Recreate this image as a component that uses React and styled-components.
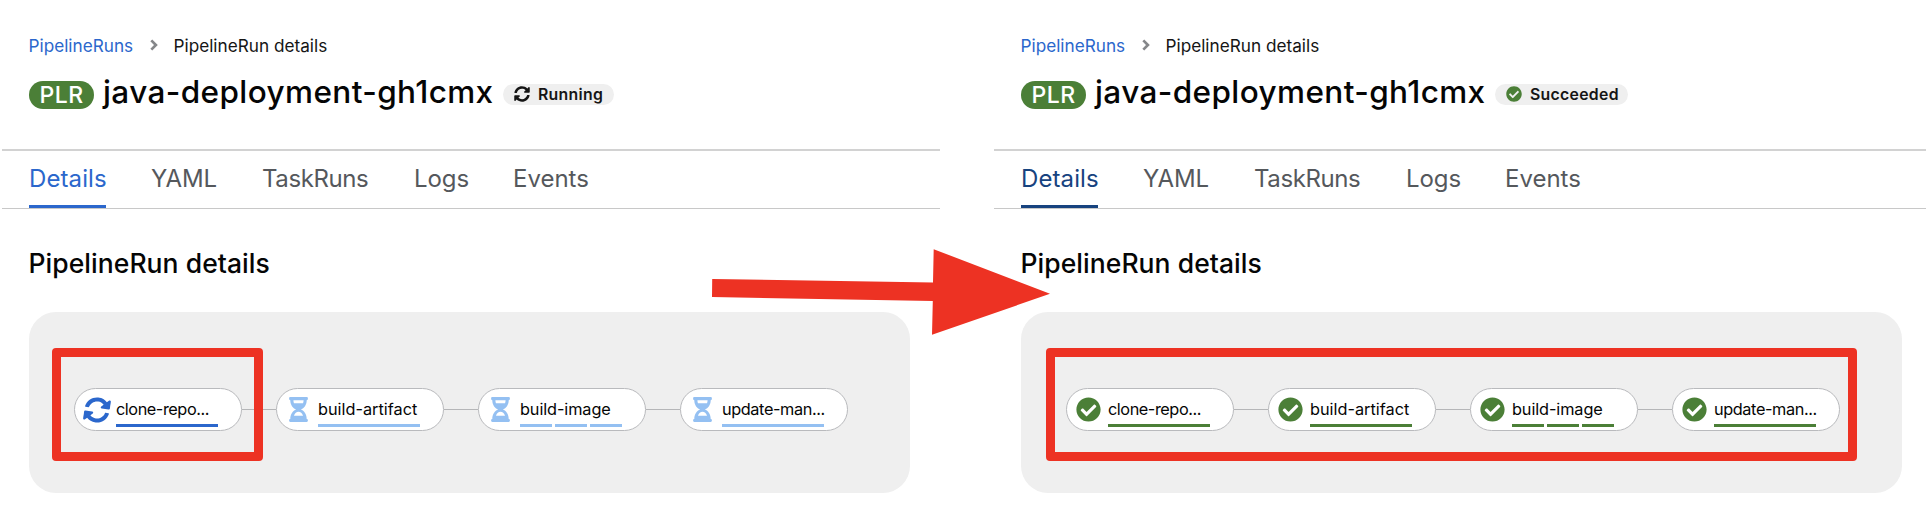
import React from 'react';
import styled, { createGlobalStyle } from 'styled-components';
import { FaCheckCircle, FaHourglassHalf, FaSyncAlt } from 'react-icons/fa';

const GlobalStyle = createGlobalStyle`
  *, *::before, *::after { box-sizing: border-box; }
  body {
    margin: 0;
    background: #fff;
    font-family: Inter, "Liberation Sans", sans-serif;
    color: #050505;
    overflow: hidden;
  }
`;

const Comparison = styled.main`
  position: relative;
  display: grid;
  grid-template-columns: 938px 932px;
  column-gap: 54px;
  height: 512px;
  padding-left: 2px;
  overflow: hidden;
`;

const Panel = styled.section`
  display: flex;
  flex-direction: column;
  min-width: 0;
`;

const Breadcrumb = styled.nav`
  display: flex;
  align-items: center;
  height: 22px;
  margin-top: 34px;
  padding-left: 26.5px;
  font-size: 17.2px;
  letter-spacing: 0;
  white-space: nowrap;

  svg { flex: none; margin: 0 16px 0 15px; }
`;

const Crumb = styled.a`
  width: ${(p) => (p.$width ? `${p.$width}px` : 'auto')};
  color: ${(p) => (p.$link ? '#2b67cc' : '#151515')};
`;

const Heading = styled.header`
  display: flex;
  align-items: center;
  height: 40px;
  margin-top: 19px;
  padding-left: 27px;
`;

const KindBadge = styled.span`
  display: flex;
  align-items: center;
  justify-content: center;
  width: 65px;
  height: 28px;
  padding-bottom: 1px;
  border-radius: 14px;
  background: #4b7f37;
  color: #fff;
  font-size: 23px;
  font-weight: 500;
  letter-spacing: 0.5px;
`;

const Name = styled.h1`
  width: 400px;
  margin: 0 0 6px 9px;
  font-size: 31.5px;
  font-weight: 500;
  line-height: 40px;
  letter-spacing: 0.4px;
  white-space: nowrap;
`;

const Status = styled.span`
  display: flex;
  align-items: center;
  width: ${(p) => p.$width}px;
  height: 21px;
  margin-bottom: 1px;
  padding: 0 0 1px 11px;
  border-radius: 11px;
  background: #efefef;
  color: #151515;
  font-size: 15.8px;
  font-weight: 600;
  letter-spacing: 0.3px;

  svg { flex: none; margin-right: 8px; color: ${(p) => p.$iconColor}; }
`;

const Tabs = styled.nav`
  display: flex;
  height: 60px;
  margin-top: 34px;
  padding-left: 27px;
  border-top: 2px solid #d2d2d2;
  border-bottom: 1px solid #c8c8c8;
`;

const Tab = styled.a`
  width: ${(p) => p.$width}px;
  margin-right: 45px;
  padding-top: 10px;
  border-bottom: 3px solid ${(p) => p.$active || 'transparent'};
  color: ${(p) => p.$active || '#55585c'};
  font-size: 24px;
  line-height: 35px;
  letter-spacing: ${(p) => p.$tracking}px;
  white-space: nowrap;
`;

const SectionTitle = styled.h2`
  margin: 36px 0 0 26.5px;
  height: 36px;
  font-size: 26.5px;
  font-weight: 500;
  line-height: 36px;
  letter-spacing: 0.05px;
`;

const Graph = styled.div`
  position: relative;
  display: flex;
  align-items: center;
  width: 881px;
  height: 181px;
  margin: 31px 0 0 27px;
  padding: 14px 0 0 44.5px;
  border-radius: 27px;
  background: #efefef;
`;

const Connector = styled.span`
  width: 34px;
  height: 1px;
  background: #b5b6b8;
`;

const Task = styled.div`
  display: flex;
  align-items: center;
  width: 168px;
  height: 43px;
  border: 1px solid #b9babd;
  border-radius: 22px;
  background: #fff;
`;

const TaskIcon = styled.span`
  display: flex;
  justify-content: center;
  width: 27px;
  margin: 0 6px 0 8.5px;
  color: ${(p) => p.$color};

  svg { flex: none; transform: rotate(${(p) => p.$turn || 0}deg); }
`;

const TaskBody = styled.div`
  display: flex;
  flex-direction: column;
  width: 102px;
  padding-top: 7px;
`;

const TaskLabel = styled.span`
  height: 21px;
  font-size: 16.3px;
  line-height: 21px;
  letter-spacing: ${(p) => p.$tracking}px;
  white-space: nowrap;
`;

const Steps = styled.div`
  display: flex;
  gap: 3px;
  margin-top: 4px;
`;

const Step = styled.span`
  flex: 1;
  height: 3px;
  background: ${(p) => p.$color};
`;

const Highlight = styled.div`
  position: absolute;
  top: 36px;
  left: ${(p) => p.$left}px;
  width: ${(p) => p.$width}px;
  height: 113px;
  border: 9px solid #ed3223;
  border-radius: 4px;
`;

const Arrow = styled.svg`
  position: absolute;
  left: 712px;
  top: 249px;
`;

const BLUE = '#2b67cc';
const NAVY = '#17437f';
const PALE = '#94c0f2';
const GREEN = '#4b7f37';

const STATES = {
  running: { Icon: FaSyncAlt, color: BLUE, size: 26, turn: 8 },
  pending: { Icon: FaHourglassHalf, color: PALE, size: 25 },
  succeeded: { Icon: FaCheckCircle, color: GREEN, size: 25 },
};

const TASKS = [
  { name: 'clone-repo...', steps: 1, tracking: -0.45 },
  { name: 'build-artifact', steps: 1, tracking: 0 },
  { name: 'build-image', steps: 3, tracking: -0.1 },
  { name: 'update-man...', steps: 1, tracking: -0.4 },
];

const TABS = [
  ['Details', 77, 0.1],
  ['YAML', 66, -0.1],
  ['TaskRuns', 107, -0.4],
  ['Logs', 54, -0.1],
  ['Events', 76, 0],
];

function Chevron() {
  return (
    <svg width="8" height="12" viewBox="0 0 8 12" fill="none" stroke="#85878a" strokeWidth="2.7">
      <path d="M1.3 1.4L5.9 6L1.3 10.6" />
    </svg>
  );
}

function TaskNode({ name, steps, tracking, state }) {
  const { Icon, color, size, turn } = STATES[state];
  return (
    <Task>
      <TaskIcon $color={color} $turn={turn}><Icon size={size} /></TaskIcon>
      <TaskBody>
        <TaskLabel $tracking={tracking}>{name}</TaskLabel>
        <Steps>
          {Array.from({ length: steps }, (_, i) => <Step key={i} $color={color} />)}
        </Steps>
      </TaskBody>
    </Task>
  );
}

function PipelineRun({ status, accent, taskStates, highlight }) {
  return (
    <Panel>
      <Breadcrumb>
        <Crumb $link $width={106}>PipelineRuns</Crumb>
        <Chevron />
        <Crumb>PipelineRun details</Crumb>
      </Breadcrumb>
      <Heading>
        <KindBadge>PLR</KindBadge>
        <Name>java-deployment-gh1cmx</Name>
        <Status $width={status.width} $iconColor={status.color}>
          <status.Icon size={16} />
          {status.label}
        </Status>
      </Heading>
      <Tabs>
        {TABS.map(([label, width, tracking], i) => (
          <Tab key={label} $width={width} $tracking={tracking} $active={i === 0 ? accent : undefined}>
            {label}
          </Tab>
        ))}
      </Tabs>
      <SectionTitle>PipelineRun details</SectionTitle>
      <Graph>
        {TASKS.map((task, i) => (
          <React.Fragment key={task.name}>
            {i > 0 && <Connector />}
            <TaskNode {...task} state={taskStates[i]} />
          </React.Fragment>
        ))}
        <Highlight $left={highlight.left} $width={highlight.width} />
      </Graph>
    </Panel>
  );
}

export default function App() {
  return (
    <>
      <GlobalStyle />
      <Comparison>
        <PipelineRun
          status={{ label: 'Running', width: 111, Icon: FaSyncAlt, color: '#151515' }}
          accent={BLUE}
          taskStates={['running', 'pending', 'pending', 'pending']}
          highlight={{ left: 23, width: 211 }}
        />
        <PipelineRun
          status={{ label: 'Succeeded', width: 133, Icon: FaCheckCircle, color: GREEN }}
          accent={NAVY}
          taskStates={['succeeded', 'succeeded', 'succeeded', 'succeeded']}
          highlight={{ left: 25, width: 811 }}
        />
        <Arrow width="340" height="88" viewBox="0 0 340 88">
          <path d="M0.2 30L221 33.5L221.7 0.2L338 44.8L220 85.8L220.8 52L0 48Z" fill="#ed3223" />
        </Arrow>
      </Comparison>
    </>
  );
}
